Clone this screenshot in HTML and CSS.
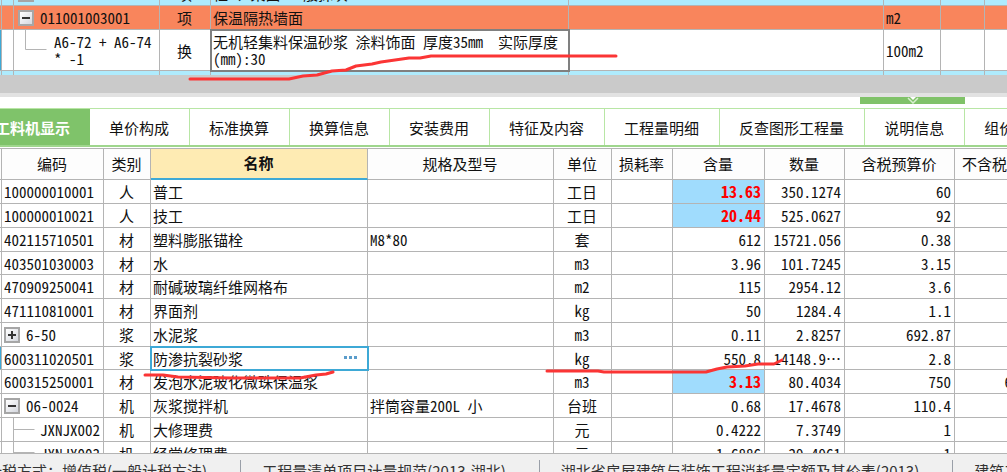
FILE: index.html
```html
<!DOCTYPE html>
<html lang="zh-CN">
<head>
<meta charset="utf-8">
<title>工料机显示</title>
<link rel="stylesheet" href="styles.css">
</head>
<body>
<main class="app">
  <section class="bill-pane">
    <table class="grid bill">
      <colgroup><col class="w-mark"><col class="w-gutter"><col class="w-bcode"><col class="w-btype"><col class="w-bname"><col><col class="w-bunit"><col class="w-bnum"><col class="w-bend"></colgroup>
      <tbody>
        <tr class="section"><td></td><td></td><td><div class="tree top"><button class="toggle" aria-label="折叠"><svg viewBox="0 0 12 12"><path d="M2 6h8"/></svg></button><span>030202000006</span></div></td><td class="c">项</td><td>柱 、梁面 一般抹灰</td><td></td><td>m2</td><td></td><td></td></tr>
        <tr class="current"><td></td><td></td><td><div class="tree top"><button class="toggle" aria-label="折叠"><svg viewBox="0 0 12 12"><path d="M2 6h8"/></svg></button><span>011001003001</span></div></td><td class="c">项</td><td>保温隔热墙面</td><td></td><td>m2</td><td></td><td></td></tr>
        <tr class="quota"><td class="active"></td><td></td><td><div class="tree"><svg class="elbow" viewBox="0 0 34 40"><path d="M11.5 0v19.5h21"/></svg><span>A6-72 + A6-74 * -1</span></div></td><td class="c">换</td><td class="focus">无机轻集料保温砂浆 涂料饰面 厚度35mm&nbsp; 实际厚度(mm):30</td><td></td><td>100m2</td><td></td><td></td></tr>
        <tr class="section"><td></td><td></td><td><div class="tree top"><button class="toggle" aria-label="折叠"><svg viewBox="0 0 12 12"><path d="M2 6h8"/></svg></button></div></td><td></td><td></td><td></td><td></td><td></td><td></td></tr>
      </tbody>
    </table>
  </section>
  <div class="scroll-track"></div>
  <div class="splitter"><button class="collapse" aria-label="收起"><svg viewBox="0 0 12 8"><path d="M3 0h6L6 3z" fill="#fff"/><path d="M1 1l5 5 5-5" fill="none" stroke="#d8f0cf" stroke-width="1.5"/></svg></button></div>
  <nav class="tabs">
    <button class="tab on">工料机显示</button><button class="tab">单价构成</button><button class="tab">标准换算</button><button class="tab">换算信息</button><button class="tab">安装费用</button><button class="tab">特征及内容</button><button class="tab">工程量明细</button><button class="tab">反查图形工程量</button><button class="tab">说明信息</button><button class="tab">组价方案</button>
  </nav>
  <section class="detail-pane">
    <table class="grid detail">
      <colgroup><col class="w-mark"><col class="w-code"><col class="w-type"><col class="w-name"><col><col class="w-unit"><col class="w-loss"><col class="w-content"><col class="w-qty"><col class="w-price"><col class="w-net"></colgroup>
      <thead><tr><th></th><th>编码</th><th>类别</th><th class="sorted">名称</th><th>规格及型号</th><th>单位</th><th>损耗率</th><th>含量</th><th>数量</th><th>含税预算价</th><th>不含税预算价</th></tr></thead>
      <tbody>
        <tr><td></td><td>100000010001</td><td class="c">人</td><td>普工</td><td></td><td class="c">工日</td><td></td><td class="r hot">13.63</td><td class="r">350.1274</td><td class="r">60</td><td></td></tr>
        <tr><td></td><td>100000010021</td><td class="c">人</td><td>技工</td><td></td><td class="c">工日</td><td></td><td class="r hot">20.44</td><td class="r">525.0627</td><td class="r">92</td><td></td></tr>
        <tr><td></td><td>402115710501</td><td class="c">材</td><td>塑料膨胀锚栓</td><td>M8*80</td><td class="c">套</td><td></td><td class="r">612</td><td class="r">15721.056</td><td class="r">0.38</td><td></td></tr>
        <tr><td></td><td>403501030003</td><td class="c">材</td><td>水</td><td></td><td class="c">m3</td><td></td><td class="r">3.96</td><td class="r">101.7245</td><td class="r">3.15</td><td></td></tr>
        <tr><td></td><td>470909250041</td><td class="c">材</td><td>耐碱玻璃纤维网格布</td><td></td><td class="c">m2</td><td></td><td class="r">115</td><td class="r">2954.12</td><td class="r">3.6</td><td></td></tr>
        <tr><td></td><td>471110810001</td><td class="c">材</td><td>界面剂</td><td></td><td class="c">kg</td><td></td><td class="r">50</td><td class="r">1284.4</td><td class="r">1.1</td><td></td></tr>
        <tr><td></td><td><div class="tree"><button class="toggle" aria-label="展开"><svg viewBox="0 0 12 12"><path d="M2 6h8M6 2v8"/></svg></button><span>6-50</span></div></td><td class="c">浆</td><td>水泥浆</td><td></td><td class="c">m3</td><td></td><td class="r">0.11</td><td class="r">2.8257</td><td class="r">692.87</td><td></td></tr>
        <tr><td class="active"></td><td>600311020501</td><td class="c">浆</td><td class="editing"><div class="editor"><span>防渗抗裂砂浆</span><button class="more" aria-label="更多"><svg viewBox="0 0 14 4"><path d="M0 0h3v3H0zM5 0h3v3H5zM10 0h3v3h-3z"/></svg></button></div></td><td></td><td class="c">kg</td><td></td><td class="r">550.8</td><td class="r">14148.9⋯</td><td class="r">2.8</td><td></td></tr>
        <tr><td></td><td>600315250001</td><td class="c">材</td><td>发泡水泥玻化微珠保温浆</td><td></td><td class="c">m3</td><td></td><td class="r hot">3.13</td><td class="r">80.4034</td><td class="r">750</td><td class="r">641.026</td></tr>
        <tr><td></td><td><div class="tree"><button class="toggle" aria-label="折叠"><svg viewBox="0 0 12 12"><path d="M2 6h8"/></svg></button><span>06-0024</span></div></td><td class="c">机</td><td>灰浆搅拌机</td><td>拌筒容量200L 小</td><td class="c">台班</td><td></td><td class="r">0.68</td><td class="r">17.4678</td><td class="r">110.4</td><td></td></tr>
        <tr><td></td><td class="child"><div class="tree"><svg class="branch" viewBox="0 0 36 24"><path d="M9.5 0v24M9.5 11.5h21"/></svg><span>JXNJX002</span></div></td><td class="c">机</td><td>大修理费</td><td></td><td class="c">元</td><td></td><td class="r">0.4222</td><td class="r">7.3749</td><td class="r">1</td><td></td></tr>
        <tr><td></td><td class="child"><div class="tree"><svg class="branch" viewBox="0 0 36 24"><path d="M9.5 0v24M9.5 11.5h21"/></svg><span>JXNJX003</span></div></td><td class="c">机</td><td>经常修理费</td><td></td><td class="c">元</td><td></td><td class="r">1.6886</td><td class="r">29.4961</td><td class="r">1</td><td></td></tr>
      </tbody>
    </table>
  </section>
  <footer class="status"><span>计税方式：增值税(一般计税方法)</span><span>工程量清单项目计量规范(2013-湖北)</span><span>湖北省房屋建筑与装饰工程消耗量定额及基价表(2013)</span><span>建筑工程</span></footer>
  <svg class="marks" viewBox="0 0 1007 472" aria-hidden="true">
    <path d="M190 79H289L303 76 317 75 332 71 346 70 356 66 372 64 381 62 409 58 420 58 431 56H616"/>
    <path d="M145 375H163L178 377 232 378H300L316 375 326 374 333 372"/>
    <path d="M547 371H598L604 372H706L717 369 727 367 745 366 758 364H774L782 360"/>
  </svg>
</main>
</body>
</html>
```
FILE: styles.css
```css
* { box-sizing: border-box; }

body {
  margin: 0;
  font: 15px/17px "Noto Sans CJK SC", sans-serif;
  font-feature-settings: "hwid";
  color: #111;
  background: #fff;
}

button {
  font: inherit;
  font-feature-settings: inherit;
  color: inherit;
  padding: 0;
  border: 0;
  background: none;
}

.app {
  position: relative;
  display: flex;
  flex-direction: column;
  height: 100vh;
  overflow: hidden;
}

.grid {
  table-layout: fixed;
  border-collapse: separate;
  border-spacing: 0;
}

.grid td,
.grid th {
  padding: 0 3px 0 2px;
  border-right: 1px solid #b4b4b4;
  border-bottom: 1px solid #b4b4b4;
  text-align: left;
  vertical-align: middle;
  white-space: nowrap;
  overflow: hidden;
}

.grid td:first-child,
.grid th:first-child { padding: 0; }

.grid .c { text-align: center; }
.grid .r { text-align: right; }
.grid .active { background: #3ea9d6; }

.w-mark { width: 2px; }

/* Upper bill of quantities */
.bill-pane { flex: none; height: 75px; overflow: hidden; }
.bill { width: 100%; margin-top: -18px; }
.bill tr { height: 24px; }
.bill .quota { height: 41px; }
.bill .section td { background: #aeebfd; }
.bill .current td { background: #f9855c; }
.bill td:nth-child(2) { padding: 0; }
.bill td:nth-child(3) { padding: 0; }
.bill td:last-child { border-right: 0; }
.bill .quota td { white-space: normal; }
.bill .focus { outline: 2px solid #808080; outline-offset: -1px; }

.w-gutter { width: 12px; }
.w-bcode { width: 146px; }
.w-btype { width: 51px; }
.w-bname { width: 358px; }
.w-bunit { width: 57px; }
.w-bnum { width: 44px; }
.w-bend { width: 22px; }

.tree { display: flex; align-items: center; gap: 6px; }
.tree.top { padding-left: 4px; }

.toggle {
  flex: none;
  width: 16px;
  height: 16px;
  border: 2px solid #a6a6a6;
  background: linear-gradient(135deg, #fff, #d4d7de);
}
.toggle svg { display: block; width: 12px; height: 12px; }
.toggle path { stroke: #333; stroke-width: 2; }

.elbow, .branch { flex: none; fill: none; stroke: #b4b4b4; }
.elbow { width: 34px; height: 40px; }
.branch { width: 36px; height: 24px; }

.scroll-track {
  flex: none;
  height: 22px;
  background: #cacaca;
  border-bottom: 4px solid #e2e2e2;
}

.splitter {
  flex: none;
  display: flex;
  justify-content: flex-end;
  height: 11px;
  padding-right: 42px;
}
.collapse {
  display: flex;
  justify-content: center;
  width: 105px;
  height: 7px;
  background: #80c269;
  overflow: hidden;
}
.collapse svg { flex: none; width: 12px; height: 8px; }

/* Tabs */
.tabs {
  flex: none;
  display: flex;
  height: 39px;
  margin-left: -25px;
  border-top: 1px solid #b8e6a5;
  border-bottom: 2px solid #9fd68d;
}
.tab {
  flex: none;
  padding: 0 20px 0 19px;
  border-right: 1px solid #b8e6a5;
}
.tab.on {
  padding-left: 20px;
  border-right: 0;
  background: #7fc36a;
  color: #fff;
  font-weight: bold;
}

/* Resource detail */
.detail-pane {
  flex: 1;
  min-height: 0;
  overflow: hidden;
  border-top: 1px solid #b4b4b4;
  margin-top: 1px;
}
.detail { width: calc(100% + 54px); }
.detail thead tr { height: 31px; }
.detail tbody tr { height: 24px; }
.detail tbody tr:nth-child(4n) { height: 23px; }
.detail th {
  padding-bottom: 2px;
  text-align: center;
  font-weight: normal;
  background: #fdfdfd;
}
.detail .sorted {
  font-weight: bold;
  background: #feebb3;
  border-bottom: 2px solid #3ea9d6;
}
.detail .hot {
  background: #a0dcfd;
  color: #f00;
  font-size: 16px;
  font-weight: bold;
}
.detail .tree { height: 22px; }
.detail .child { padding: 0 0 0 2px; }
.detail .child .tree { gap: 0; }
.detail .editing { outline: 2px solid #3ea9d6; outline-offset: -1px; }
.editor { display: flex; justify-content: space-between; align-items: center; }
.more { width: 20px; height: 16px; }
.more svg { display: block; width: 14px; height: 4px; fill: #5b9dcb; }

.w-code { width: 102px; }
.w-type { width: 47px; }
.w-name { width: 217px; }
.w-unit { width: 58px; }
.w-loss { width: 61px; }
.w-content { width: 92px; }
.w-qty { width: 80px; }
.w-price { width: 110px; }
.w-net { width: 106px; }

/* Status bar */
.status {
  flex: none;
  display: flex;
  height: 19px;
  padding-top: 6px;
  overflow: hidden;
  border-top: 1px solid #b4b4b4;
  background: #f0f0f0;
  color: #333;
  font-feature-settings: normal;
  line-height: 22px;
}
.status span {
  flex: none;
  padding: 0 33px 0 21px;
  border-right: 1px solid #9a9fa8;
  white-space: nowrap;
}
.status span:first-child { margin-left: -34px; }
.status span:last-child { border-right: 0; }

/* Red pen annotations over the sheet */
.marks {
  position: absolute;
  top: 0;
  left: 0;
  width: 1007px;
  height: 472px;
  pointer-events: none;
  fill: none;
  stroke: #fb3535;
  stroke-width: 3;
  stroke-linecap: round;
  stroke-linejoin: round;
}
```
